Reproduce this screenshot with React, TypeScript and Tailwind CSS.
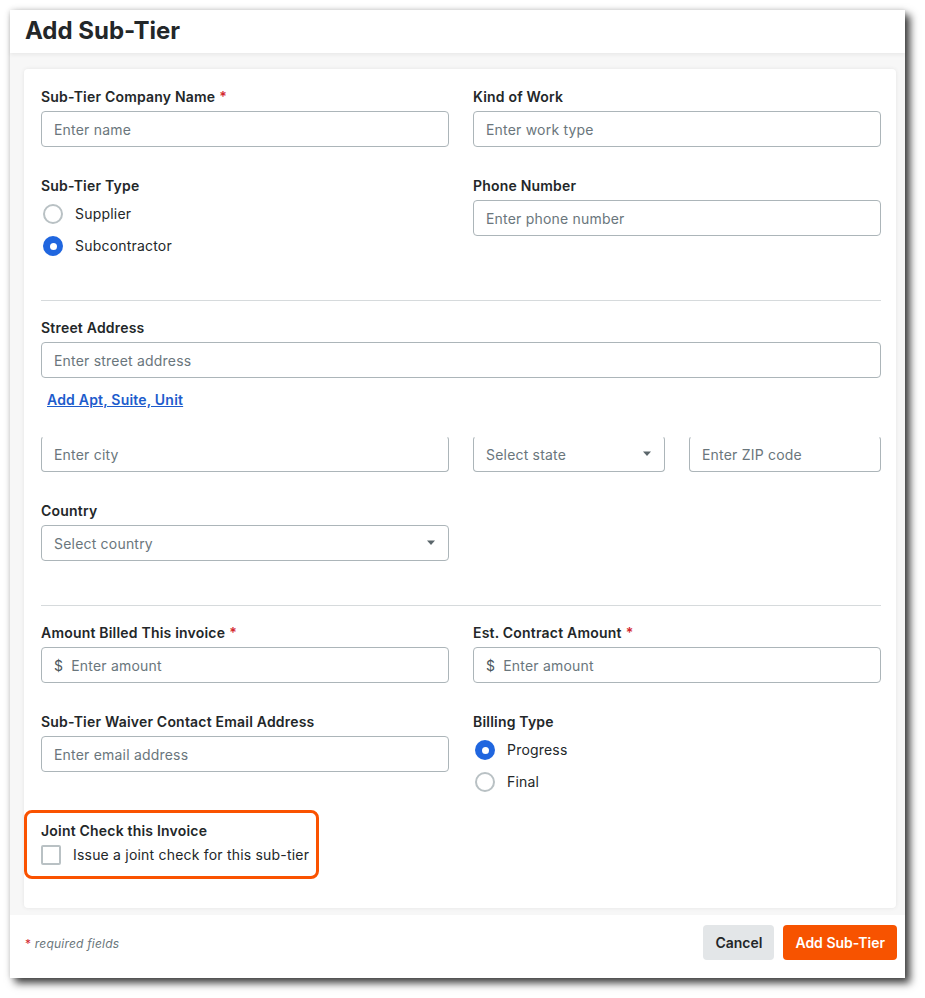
const labelCls = "block text-[14px] leading-5 font-semibold text-[#232729]";
const inputCls =
  "h-9 rounded-[4px] border border-[#acb5b9] bg-white px-3 flex items-center text-[14px] text-[#6a767c]";

function Req() {
  return <span className="text-[#d3282f] ml-1">*</span>;
}

function Field({ label, placeholder, required, prefix }: { label: string; placeholder: string; required?: boolean; prefix?: string }) {
  return (
    <div>
      <label className={labelCls}>
        {label}
        {required && <Req />}
      </label>
      <div className={`${inputCls} w-full mt-1`}>
        {prefix && <span className="mr-2 text-[#4b575d]">{prefix}</span>}
        {placeholder}
      </div>
    </div>
  );
}

function Caret() {
  return (
    <svg width="10" height="6" viewBox="0 0 10 6" className="ml-auto">
      <path d="M1 0.5h8L5 5z" fill="#5b666b" />
    </svg>
  );
}

function Radio({ label, checked }: { label: string; checked?: boolean }) {
  return (
    <div className="flex items-center gap-3 ml-[2px]">
      {checked ? (
        <span className="w-5 h-5 rounded-full bg-[#2066df] flex items-center justify-center">
          <span className="w-[7px] h-[7px] rounded-full bg-white" />
        </span>
      ) : (
        <span className="w-5 h-5 rounded-full border-2 border-[#b9c1c4] bg-white" />
      )}
      <span className="text-[14px] leading-5 text-[#232729]">{label}</span>
    </div>
  );
}

export default function App() {
  return (
    <div className="min-h-screen bg-white p-[10px] font-['Inter',sans-serif] tracking-[0.2px]">
      <div className="w-[895px] h-[968px] flex flex-col bg-white shadow-[5px_5px_8px_rgba(0,0,0,0.75),0_0_6px_rgba(0,0,0,0.15)]">
        <div className="h-[43px] px-[15px] flex items-center relative z-10 bg-white shadow-[0_2px_4px_rgba(0,0,0,0.06)]">
          <h1 className="text-[24px] font-bold text-[#232729] leading-none pb-[2px] tracking-normal">Add Sub-Tier</h1>
        </div>

        <div className="bg-[#f7f7f7] pl-[14px] pr-[9px] pt-4 pb-[7px]">
          <div className="h-[839px] bg-white rounded-[4px] shadow-[0_0_4px_rgba(0,0,0,0.08)] pl-[17px] pr-[15px] pt-[18px]">
            <div className="grid grid-cols-2 gap-x-6">
              <Field label="Sub-Tier Company Name" placeholder="Enter name" required />
              <Field label="Kind of Work" placeholder="Enter work type" />
            </div>

            <div className="grid grid-cols-2 gap-x-6 mt-[29px]">
              <div>
                <label className={labelCls}>Sub-Tier Type</label>
                <div className="mt-2 flex flex-col gap-3">
                  <Radio label="Supplier" />
                  <Radio label="Subcontractor" checked />
                </div>
              </div>
              <Field label="Phone Number" placeholder="Enter phone number" />
            </div>

            <div className="mt-[44px] h-px bg-[#d6dadc]" />

            <div className="mt-[17px]">
              <Field label="Street Address" placeholder="Enter street address" />
            </div>
            <div className="mt-3 pl-[6px] text-[14px] leading-5">
              <a className="font-semibold text-[#1d5ccc] underline">Add Apt, Suite, Unit</a>
            </div>

            <div className="mt-[26px] grid grid-cols-[408px_192px_192px] gap-6">
              <div className={`${inputCls} border-t-transparent`}>Enter city</div>
              <div className={`${inputCls} border-t-transparent`}>
                Select state
                <Caret />
              </div>
              <div className={`${inputCls} border-t-transparent`}>Enter ZIP code</div>
            </div>

            <div className="mt-[29px] w-[408px]">
              <label className={labelCls}>Country</label>
              <div className={`${inputCls} w-full mt-1`}>
                Select country
                <Caret />
              </div>
            </div>

            <div className="mt-[44px] h-px bg-[#d6dadc]" />

            <div className="grid grid-cols-2 gap-x-6 mt-[17px]">
              <Field label="Amount Billed This invoice" placeholder="Enter amount" required prefix="$" />
              <Field label="Est. Contract Amount" placeholder="Enter amount" required prefix="$" />
            </div>

            <div className="grid grid-cols-2 gap-x-6 mt-[29px]">
              <Field label="Sub-Tier Waiver Contact Email Address" placeholder="Enter email address" />
              <div>
                <label className={labelCls}>Billing Type</label>
                <div className="mt-2 flex flex-col gap-3">
                  <Radio label="Progress" checked />
                  <Radio label="Final" />
                </div>
              </div>
            </div>

            <div className="mt-[18px] -ml-[17px] w-[295px] rounded-[8px] border-[3px] border-[#fa5200] px-[14px] pt-2 pb-[11px]">
              <label className={labelCls}>Joint Check this Invoice</label>
              <div className="mt-1 flex items-center gap-3">
                <span className="w-5 h-5 shrink-0 rounded-[2px] border-2 border-[#b9c1c4] bg-white" />
                <span className="text-[14px] leading-5 text-[#232729] whitespace-nowrap">
                  Issue a joint check for this sub-tier
                </span>
              </div>
            </div>
          </div>
        </div>

        <div className="flex-1 flex items-start pl-[15px] pr-2 pt-[10px]">
          <div className="mt-[10px] text-[12px] italic text-[#6a767c]">
            <span className="text-[#d3282f] not-italic">*</span> required fields
          </div>
          <div className="ml-auto flex gap-[9px] tracking-normal">
            <button className="h-[35px] px-3 rounded-[4px] bg-[#e3e6e8] text-[14px] font-semibold text-[#232729]">
              Cancel
            </button>
            <button className="h-[35px] px-3 rounded-[4px] bg-[#f75300] text-[14px] font-semibold text-white">
              Add Sub-Tier
            </button>
          </div>
        </div>
      </div>
    </div>
  );
}
